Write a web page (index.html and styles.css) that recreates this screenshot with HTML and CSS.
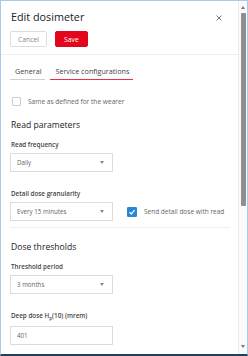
FILE: index.html
```html
<!DOCTYPE html>
<html lang="en">
<head>
  <meta charset="UTF-8" />
  <meta name="viewport" content="width=device-width, initial-scale=1.0" />
  <title>Edit dosimeter</title>
  <link rel="stylesheet" href="styles.css">
</head>
<body>
<div class="frame">
  <div class="dialog">
    <div class="head">
      <div class="title-row">
        <h1>Edit dosimeter</h1>
        <svg class="close" width="6" height="6" viewBox="0 0 6 6"><path d="M0.5 0.5L5.5 5.5M5.5 0.5L0.5 5.5" stroke="#666" stroke-width="0.9"/></svg>
      </div>
      <div class="actions">
        <button class="btn">Cancel</button>
        <button class="btn primary">Save</button>
      </div>
    </div>
    <div class="content">
      <div class="tabs">
        <div class="tab">General</div>
        <div class="tab active">Service configurations</div>
      </div>
      <label class="check first">
        <span class="box"></span>
        <span>Same as defined for the wearer</span>
      </label>

      <h2>Read parameters</h2>
      <div class="field">
        <div class="label">Read frequency</div>
        <div class="select">Daily<span class="caret"></span></div>
      </div>
      <div class="field row">
        <div>
          <div class="label">Detail dose granularity</div>
          <div class="select">Every 15 minutes<span class="caret"></span></div>
        </div>
        <label class="check">
          <span class="box checked">
            <svg width="8" height="8" viewBox="0 0 8 8"><path d="M1.5 4.2L3.3 6L6.6 2.2" fill="none" stroke="#fff" stroke-width="1.2"/></svg>
          </span>
          <span>Send detail dose with read</span>
        </label>
      </div>
      <hr>

      <h2>Dose thresholds</h2>
      <div class="field">
        <div class="label">Threshold period</div>
        <div class="select">3 months<span class="caret"></span></div>
      </div>
      <div class="field">
        <div class="label">Deep dose H<sub>p</sub>(10) (mrem)</div>
        <div class="input">401</div>
      </div>
    </div>
  </div>
  <div class="scrollbar">
    <span class="arrow up"></span>
    <span class="thumb"></span>
    <span class="arrow down"></span>
  </div>
</div>
</body>
</html>
```

FILE: styles.css
```css
body {
  margin: 0;
  font-family: 'Open Sans', 'Liberation Sans', sans-serif;
  color: #333;
  background: #fff;
}
.frame {
  width: 248px;
  height: 356px;
  box-sizing: border-box;
  border: 1px solid #a9cbea;
  border-bottom: 2px solid #23405f;
  display: flex;
  overflow: hidden;
}
.dialog {
  flex: 1;
  min-width: 0;
}
.head {
  padding: 8px 9px 7px 9px;
  border-bottom: 1px solid #eeeeee;
}
.title-row {
  display: flex;
  justify-content: space-between;
  align-items: center;
}
h1 {
  margin: 0;
  font-size: 10.8px;
  line-height: 16px;
  font-weight: 400;
  color: #222;
  padding-left: 1px;
}
.close {
  margin-right: 7px;
  margin-top: 1px;
}
.actions {
  display: flex;
  gap: 8px;
  margin-top: 6px;
}
.btn {
  height: 16px;
  padding: 0 7px;
  font-family: inherit;
  font-size: 6.8px;
  border: 1px solid #dddddd;
  border-radius: 2px;
  background: #fff;
  color: #888;
}
.btn.primary {
  background: #e3051b;
  border-color: #e3051b;
  color: #fff;
  padding: 0 8px;
}
.content {
  padding: 0 8px 0 9px;
}
.tabs {
  display: flex;
  gap: 5px;
  margin-top: 10px;
}
.tab {
  font-size: 7.2px;
  line-height: 12px;
  padding: 0 4px 2px 5px;
  border-bottom: 1px solid #cfcfcf;
  color: #444;
}
.tab.active {
  border-bottom-color: #e8333f;
}
.check {
  display: flex;
  align-items: center;
  gap: 7px;
  font-size: 6.6px;
  color: #666;
}
.check.first {
  margin-top: 17px;
  padding-left: 2px;
}
.box {
  width: 9px;
  height: 9px;
  box-sizing: border-box;
  border: 1px solid #cccccc;
  border-radius: 1px;
  display: flex;
  align-items: center;
  justify-content: center;
}
.box.checked {
  width: 10px;
  height: 10px;
  background: #2a86d8;
  border-color: #2a86d8;
}
h2 {
  margin: 12px 0 0 0;
  font-size: 8.6px;
  line-height: 14px;
  font-weight: 400;
  color: #222;
  padding-left: 1px;
}
.field {
  margin-top: 8px;
}
.field + .field {
  margin-top: 17px;
}
.label {
  font-size: 6.3px;
  line-height: 10px;
  font-weight: 600;
  color: #444;
  padding-left: 1px;
  margin-bottom: 3px;
}
.label sub {
  font-size: 4.5px;
}
.select, .input {
  width: 103px;
  height: 19px;
  box-sizing: border-box;
  border: 1px solid #dcdcdc;
  padding: 0 6px;
  display: flex;
  align-items: center;
  justify-content: space-between;
  font-size: 6.2px;
  color: #666;
}
.caret {
  width: 0;
  height: 0;
  border-left: 2.5px solid transparent;
  border-right: 2.5px solid transparent;
  border-top: 3px solid #888;
  margin-right: 2px;
}
.row {
  display: flex;
  align-items: flex-end;
  gap: 14px;
}
.row .check {
  height: 19px;
  font-size: 6.5px;
}
hr {
  border: 0;
  border-top: 1px solid #eeeeee;
  margin: 6px 0 0 0;
}
.scrollbar {
  width: 9px;
  background: #fafafa;
  border-left: 1px solid #eeeeee;
  display: flex;
  flex-direction: column;
  align-items: center;
  padding-top: 5px;
  box-sizing: border-box;
}
.arrow {
  width: 0;
  height: 0;
  border-left: 2.5px solid transparent;
  border-right: 2.5px solid transparent;
}
.arrow.up {
  border-bottom: 3px solid #777;
}
.arrow.down {
  border-top: 3px solid #777;
  margin-top: auto;
  margin-bottom: 6px;
}
.thumb {
  width: 5px;
  height: 193px;
  margin-top: 4px;
  background: #8e8e8e;
  border-radius: 1px;
}
```
